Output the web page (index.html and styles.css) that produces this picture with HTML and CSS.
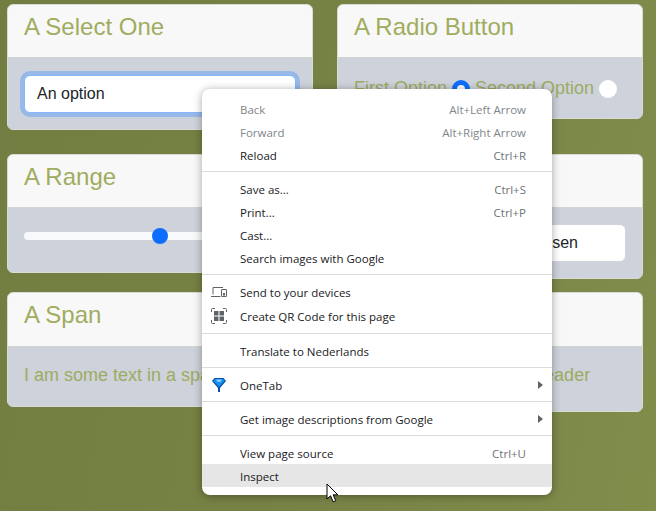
FILE: index.html
```html
<!DOCTYPE html>
<html lang="en">
<head>
    <meta charset="UTF-8">
    <title>Form Elements</title>
    <link rel="stylesheet" href="styles.css">
</head>
<body>
<div class="row row-wide">
    <div class="card">
        <h3 class="card-header">A Select One</h3>
        <div class="card-body">
            <select class="field field-focus">
                <option>An option</option>
            </select>
        </div>
    </div>
    <div class="card">
        <h3 class="card-header">A Radio Button</h3>
        <div class="card-body card-text">
            <label>First Option</label>
            <input class="radio" type="radio" name="choice" checked>
            <label>Second Option</label>
            <input class="radio" type="radio" name="choice">
        </div>
    </div>
</div>

<div class="row row-tight">
    <div class="card">
        <h3 class="card-header">A Range</h3>
        <div class="card-body">
            <input class="range" type="range" min="0" max="100" value="50">
        </div>
    </div>
    <div class="card">
        <h3 class="card-header">A File</h3>
        <div class="card-body card-body-file">
            <div class="field field-end">Bestand kiesen</div>
        </div>
    </div>
</div>

<div class="row row-last">
    <div class="card">
        <h3 class="card-header">A Span</h3>
        <div class="card-body card-text card-span">
            <span>I am some text in a span</span>
        </div>
    </div>
    <div class="card">
        <h3 class="card-header">A Header</h3>
        <div class="card-body card-text card-span card-tall">
            <span>I am some text in a h3 header</span>
        </div>
    </div>
</div>

<div class="menu">
    <div class="menu-item disabled"><span class="menu-label">Back</span><span class="menu-key">Alt+Left Arrow</span></div>
    <div class="menu-item disabled"><span class="menu-label">Forward</span><span class="menu-key">Alt+Right Arrow</span></div>
    <div class="menu-item"><span class="menu-label">Reload</span><span class="menu-key">Ctrl+R</span></div>
    <div class="menu-sep"></div>
    <div class="menu-item"><span class="menu-label">Save as...</span><span class="menu-key">Ctrl+S</span></div>
    <div class="menu-item"><span class="menu-label">Print...</span><span class="menu-key">Ctrl+P</span></div>
    <div class="menu-item"><span class="menu-label">Cast...</span></div>
    <div class="menu-item"><span class="menu-label">Search images with Google</span></div>
    <div class="menu-sep"></div>
    <div class="menu-item menu-item-icon">
        <svg class="menu-icon" width="16" height="16" viewBox="0 0 16 16">
            <path d="M2 3.500h10M2 3.500v7M0 12.500h9.500" fill="none" stroke="#5f6368" stroke-width="1"/>
            <rect x="10.500" y="5.500" width="5" height="7" rx="0.500" fill="none" stroke="#5f6368" stroke-width="1"/>
            <rect x="12" y="9" width="2" height="2.500" fill="#5f6368"/>
        </svg>
        <span class="menu-label">Send to your devices</span>
    </div>
    <div class="menu-item menu-item-icon">
        <svg class="menu-icon" width="16" height="16" viewBox="0 0 16 16">
            <path d="M0.500 4V1.500a1 1 0 0 1 1-1H4M12 0.500h2.500a1 1 0 0 1 1 1V4M15.500 12v2.500a1 1 0 0 1-1 1H12M4 15.500H1.500a1 1 0 0 1-1-1V12" fill="none" stroke="#5f6368" stroke-width="1"/>
            <rect x="3" y="3" width="4.500" height="4.500" fill="#5f6368"/>
            <rect x="8.500" y="3" width="4.500" height="4.500" fill="#5f6368"/>
            <rect x="3" y="8.500" width="4.500" height="4.500" fill="#5f6368"/>
            <rect x="8.500" y="8.500" width="4.500" height="4.500" fill="#5f6368"/>
        </svg>
        <span class="menu-label">Create QR Code for this page</span>
    </div>
    <div class="menu-sep"></div>
    <div class="menu-item"><span class="menu-label">Translate to Nederlands</span></div>
    <div class="menu-sep"></div>
    <div class="menu-item">
        <svg class="menu-icon" width="16" height="16" viewBox="0 0 16 16">
            <path d="M3.500 1h9L15 4l-6 7v4H7v-4L1 4z" fill="#0a4fa6"/>
            <path d="M4 2h8l1.500 2L8 10 2.500 4z" fill="#1590f0"/>
            <path d="M5 2.500h6L9.500 5h-3z" fill="#7fd0fb"/>
        </svg>
        <span class="menu-label">OneTab</span><span class="menu-arrow"></span>
    </div>
    <div class="menu-sep"></div>
    <div class="menu-item"><span class="menu-label">Get image descriptions from Google</span><span class="menu-arrow"></span></div>
    <div class="menu-sep"></div>
    <div class="menu-item"><span class="menu-label">View page source</span><span class="menu-key">Ctrl+U</span></div>
    <div class="menu-item active"><span class="menu-label">Inspect</span></div>
</div>

<svg class="cursor" width="14" height="20" viewBox="0 0 14 20">
    <path d="M1 1v15l3.500-3.200 2.700 6 2.600-1.100-2.700-5.900h4.700z" fill="#fff" stroke="#000" stroke-width="1"/>
</svg>
</body>
</html>
```

FILE: styles.css
```css
html, body {
    height: 100%;
}
body {
    margin: 0;
    padding: 4px 0 0 7px;
    box-sizing: border-box;
    overflow: hidden;
    background: linear-gradient(100deg, #727d41 0%, #778245 50%, #808d4b 100%);
    font-family: "Liberation Sans", Arial, sans-serif;
}

.row {
    display: flex;
    align-items: flex-start;
    gap: 24px;
}
.row-wide {
    margin-bottom: 24px;
}
.row-tight {
    margin-bottom: 13px;
}

.card {
    width: 306px;
    box-sizing: border-box;
    border: 1px solid #d9dbd6;
    border-radius: 6px;
    overflow: hidden;
    background-color: #ced2da;
}
.card-header {
    margin: 0;
    height: 53px;
    box-sizing: border-box;
    padding: 4px 16px;
    font-size: 24px;
    font-weight: 400;
    line-height: 36px;
    color: #a0ac5e;
    background-color: #f8f8f8;
    border-bottom: 1px solid #d2d3d3;
}
.row-last .card-header {
    height: 54px;
}
.card-body {
    padding: 17px 16px 16px;
}
.card-body-file {
    padding-top: 16px;
}
.card-text {
    display: flex;
    align-items: center;
    height: 27px;
    font-size: 18px;
    color: #9dab62;
}
.card-span {
    padding-top: 15px;
    padding-bottom: 17px;
}
.card-tall {
    padding-left: 14px;
    padding-bottom: 22px;
}

.field {
    display: block;
    width: 100%;
    height: 38px;
    box-sizing: border-box;
    padding: 0 12px;
    border: 1px solid #ced4da;
    border-radius: 6px;
    background-color: #fff;
    font-family: inherit;
    font-size: 16px;
    line-height: 36px;
    color: #212529;
    appearance: none;
}
.field-focus {
    border-color: #86b7fe;
    outline: none;
    box-shadow: 0 0 0 4px #98b9e8;
}
.field-end {
    text-align: right;
    padding-right: 47px;
}

.radio {
    width: 18px;
    height: 18px;
    margin: 0 5px 0 5px;
    box-sizing: border-box;
    border-radius: 50%;
    background-color: #fff;
    appearance: none;
}
.radio:checked {
    border: 5px solid #0d6efd;
}

.range {
    display: block;
    width: 100%;
    height: 22px;
    margin: 0 0 9px;
    padding: 0;
    background: transparent;
    appearance: none;
}
.range::-webkit-slider-runnable-track {
    height: 8px;
    border-radius: 4px;
    background-color: #f8f9fa;
}
.range::-webkit-slider-thumb {
    width: 16px;
    height: 16px;
    margin-top: -4px;
    border-radius: 50%;
    background-color: #0d6efd;
    appearance: none;
}

.menu {
    position: absolute;
    left: 202px;
    top: 89px;
    width: 350px;
    box-sizing: border-box;
    padding: 8px 0;
    border-radius: 8px;
    background-color: #fff;
    box-shadow: 0 1px 8px rgba(0, 0, 0, 0.35);
    font-family: "Open Sans", sans-serif;
    font-size: 11.5px;
    color: #202124;
}
.menu-item {
    position: relative;
    display: flex;
    justify-content: space-between;
    align-items: center;
    height: 23px;
    box-sizing: border-box;
    padding: 1px 26px 0 38px;
}
.menu-item-icon {
    height: 24px;
    padding-top: 0;
}
.menu-item.disabled {
    color: #80868b;
}
.menu-item.active {
    background-color: #e6e6e6;
}
.menu-key {
    color: #6f7377;
}
.disabled .menu-key {
    color: #80868b;
}
.menu-icon {
    position: absolute;
    left: 9px;
    top: 50%;
    margin-top: -8px;
}
.menu-arrow {
    position: absolute;
    right: 9px;
    top: 50%;
    margin-top: -4px;
    border-left: 5px solid #5f6368;
    border-top: 4px solid transparent;
    border-bottom: 4px solid transparent;
}
.menu-sep {
    height: 1px;
    margin: 5px 0;
    background-color: #dadce0;
}

.cursor {
    position: absolute;
    left: 326px;
    top: 483px;
}
```
